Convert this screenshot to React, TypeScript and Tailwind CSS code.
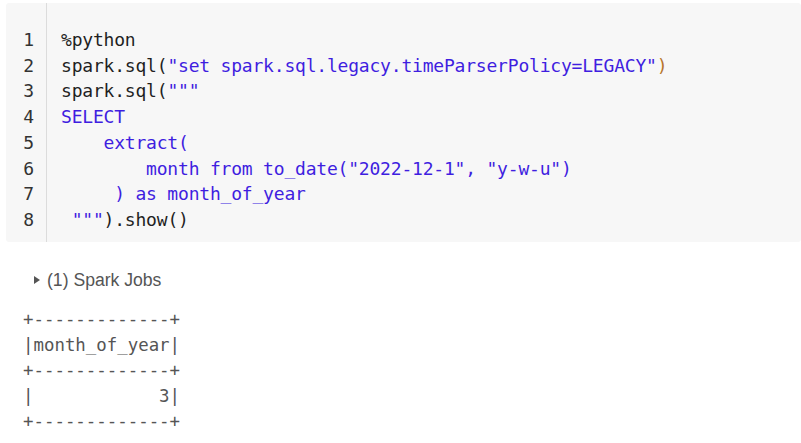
const mono = "font-['DejaVu_Sans_Mono','Liberation_Mono',monospace]";

const S = ({ children }: { children: React.ReactNode }) => (
  <span className="text-[#3f1ee0]">{children}</span>
);

const lines: React.ReactNode[] = [
  <>%python</>,
  <>
    spark.sql(<S>"set spark.sql.legacy.timeParserPolicy=LEGACY"</S>
    <span className="text-[#b8762b]">)</span>
  </>,
  <>
    spark.sql(<S>"""</S>
  </>,
  <S>SELECT</S>,
  <S>{"    extract("}</S>,
  <S>{'        month from to_date("2022-12-1", "y-w-u")'}</S>,
  <S>{"     ) as month_of_year"}</S>,
  <>
    <S>{' """'}</S>).show()
  </>,
];

// row heights measured from the screenshot (25.7px average)
const rowH = [
  "h-[26px] leading-[26px]",
  "h-[25px] leading-[25px]",
  "h-[26px] leading-[26px]",
  "h-[26px] leading-[26px]",
  "h-[26px] leading-[26px]",
  "h-[25px] leading-[25px]",
  "h-[26px] leading-[26px]",
  "h-[26px] leading-[26px]",
];

const table = [
  "+-------------+",
  "|month_of_year|",
  "+-------------+",
  "|            3|",
  "+-------------+",
];

export default function App() {
  return (
    <div className="w-[801px] h-[443px] bg-white overflow-hidden pl-[6px] pt-[3px]">
      {/* CODE CELL */}
      <div className={`flex bg-[#f7f7f7] rounded-[3px] h-[239px] text-[18px] tracking-[-0.2px] ${mono}`}>
        <div className="w-[41px] border-r border-[#dcdcdc] pt-[24px] pr-[12px] text-right text-[#333]">
          {lines.map((_, i) => (
            <div key={i} className={rowH[i]}>{i + 1}</div>
          ))}
        </div>
        <div className="pl-[14px] pt-[24px] text-[#1f1f1f] whitespace-pre">
          {lines.map((l, i) => (
            <div key={i} className={rowH[i]}>{l}</div>
          ))}
        </div>
      </div>

      {/* OUTPUT */}
      <div className="flex items-center gap-[6px] mt-[25px] pl-[27px] text-[17.6px] text-[#555] font-['Liberation_Sans',Arial,sans-serif]">
        <svg width="8" height="10" viewBox="0 0 8 10">
          <path d="M1 1 L7 5 L1 9 Z" fill="#555" />
        </svg>
        <span>(1) Spark Jobs</span>
      </div>
      <div className={`mt-[14px] pl-[17px] text-[17.4px] leading-[25.5px] text-[#555] whitespace-pre ${mono}`}>
        {table.map((r, i) => (
          <div key={i}>{r}</div>
        ))}
      </div>
    </div>
  );
}
